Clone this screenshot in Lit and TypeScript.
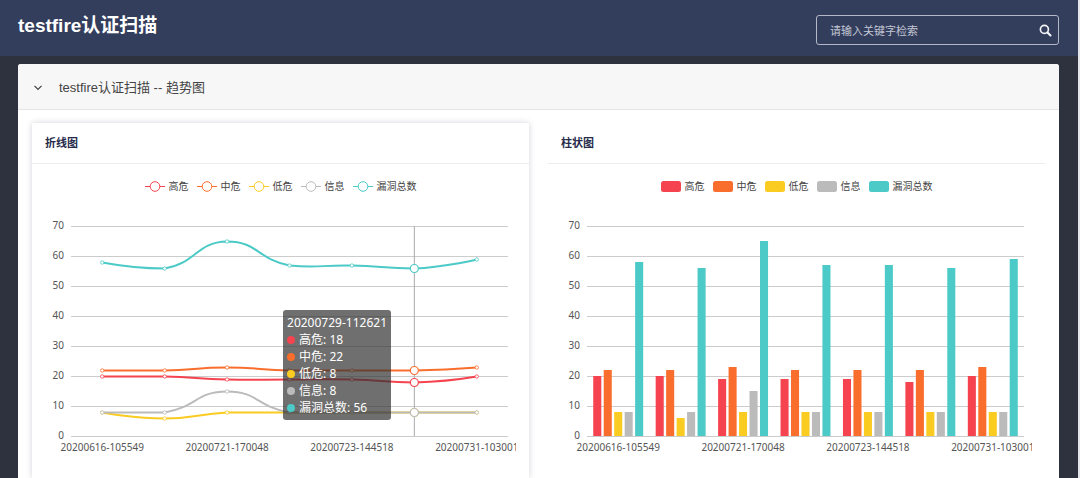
import { LitElement, html, svg, css, nothing } from "lit";
import { customElement, property, state } from "lit/decorators.js";
import { classMap } from "lit/directives/class-map.js";

interface Series {
  name: string;
  color: string;
  values: number[];
}

const SCANS = [
  "20200616-105549",
  "20200716-153012",
  "20200721-170048",
  "20200722-101530",
  "20200723-144518",
  "20200729-112621",
  "20200731-103001",
];

const SERIES: Series[] = [
  { name: "高危", color: "#f5444f", values: [20, 20, 19, 19, 19, 18, 20] },
  { name: "中危", color: "#fa6e2d", values: [22, 22, 23, 22, 22, 22, 23] },
  { name: "低危", color: "#facb21", values: [8, 6, 8, 8, 8, 8, 8] },
  { name: "信息", color: "#bbbbbb", values: [8, 8, 15, 8, 8, 8, 8] },
  { name: "漏洞总数", color: "#4bcac7", values: [58, 56, 65, 57, 57, 56, 59] },
];

const TICKS = [0, 10, 20, 30, 40, 50, 60, 70];
const PLOT = { left: 26, right: 8, top: 33, height: 210 };
const yOf = (v: number) => PLOT.top + PLOT.height - (v / 70) * PLOT.height;

type Point = [number, number];

/** Smooth curve whose control points stay inside the vertical range of the series. */
function smoothPath(points: Point[]): string {
  const ys = points.map((p) => p[1]);
  const min = Math.min(...ys);
  const max = Math.max(...ys);
  const clamp = (y: number) => Math.min(max, Math.max(min, y));
  let d = `M${points[0]}`;
  let out = points[0];
  for (let i = 1; i < points.length; i++) {
    const p = points[i];
    const next = points[i + 1];
    let into = p;
    let nextOut = p;
    if (next) {
      const prev = points[i - 1];
      const v: Point = [next[0] - prev[0], next[1] - prev[1]];
      const before = Math.hypot(p[0] - prev[0], p[1] - prev[1]);
      const after = Math.hypot(next[0] - p[0], next[1] - p[1]);
      const ratio = after / (after + before);
      into = [p[0] - v[0] * 0.5 * (1 - ratio), clamp(p[1] - v[1] * 0.5 * (1 - ratio))];
      nextOut = [p[0] + v[0] * 0.5 * ratio, clamp(p[1] + v[1] * 0.5 * ratio)];
    }
    d += `C${out} ${into} ${p}`;
    out = nextOut;
  }
  return d;
}

@customElement("trend-chart")
export class TrendChart extends LitElement {
  @property() kind: "line" | "bar" = "line";
  @property({ type: Number }) active = -1;
  @state() private width = 471;
  @state() private hidden_ = new Set<string>();

  private observer?: ResizeObserver;

  static styles = css`
    :host {
      display: block;
      position: relative;
      padding-top: 15px;
      font-family: "Noto Sans", "Noto Sans CJK SC", sans-serif;
      font-size: 10px;
      color: #444;
    }
    .legend {
      display: flex;
      justify-content: center;
      gap: 8px;
      margin: 0;
      padding: 0;
      list-style: none;
    }
    .key {
      display: flex;
      align-items: center;
      gap: 4px;
      height: 14px;
      padding: 0;
      border: 0;
      background: none;
      font: inherit;
      line-height: 14px;
      color: #444;
      cursor: pointer;
      white-space: nowrap;
    }
    .key.off {
      opacity: 0.4;
    }
    .mark {
      display: block;
      width: 20px;
      height: 12px;
    }
    .plot {
      display: block;
      width: 100%;
      height: 260px;
      overflow: hidden;
    }
    .plot text {
      fill: #555;
    }
    .grid {
      stroke: #ccc;
    }
    .pointer {
      stroke: #aaa;
    }
    .curve {
      fill: none;
      stroke-width: 2;
      stroke-linejoin: bevel;
    }
    .dot {
      fill: #fff;
    }
    .tip {
      position: absolute;
      top: 146px;
      box-sizing: border-box;
      padding: 4px;
      border-radius: 3px;
      background: rgba(50, 50, 50, 0.7);
      color: #fff;
      font-size: 12px;
      line-height: 17px;
      white-space: nowrap;
      pointer-events: none;
    }
    .row {
      display: flex;
      align-items: center;
      gap: 4px;
      height: 17px;
    }
    .bullet {
      width: 8px;
      height: 8px;
      border-radius: 50%;
    }
  `;

  connectedCallback() {
    super.connectedCallback();
    this.observer = new ResizeObserver(([entry]) => {
      this.width = Math.round(entry.contentRect.width);
    });
    this.observer.observe(this);
  }

  disconnectedCallback() {
    super.disconnectedCallback();
    this.observer?.disconnect();
  }

  private get band() {
    return (this.width - PLOT.left - PLOT.right) / SCANS.length;
  }

  private centre(i: number) {
    return PLOT.left + this.band * (i + 0.5);
  }

  private toggle(name: string) {
    const next = new Set(this.hidden_);
    if (!next.delete(name)) next.add(name);
    this.hidden_ = next;
  }

  private mark(color: string) {
    return this.kind === "line"
      ? html`<svg class="mark" viewBox="0 0 20 12" aria-hidden="true">
          <path d="M0 6.5H20" stroke=${color} stroke-width="1.2" />
          <circle cx="10" cy="6.5" r="4.8" fill="#fff" stroke=${color} />
        </svg>`
      : html`<svg class="mark" viewBox="0 0 20 12" aria-hidden="true">
          <rect y="1" width="20" height="11" rx="2.5" fill=${color} />
        </svg>`;
  }

  private lines(shown: Series[]) {
    return shown.map((s) => {
      const points = s.values.map((v, i): Point => [this.centre(i), yOf(v) + 0.5]);
      return svg`
        <path class="curve" stroke=${s.color} d=${smoothPath(points)} />
        ${points.map(
          (p, i) => svg`<circle class="dot" cx=${p[0]} cy=${p[1]}
            r=${i === this.active ? 4 : 1.7} stroke=${s.color}
            stroke-width=${i === this.active ? 1.2 : 0.8} />`
        )}`;
    });
  }

  private bars(shown: Series[]) {
    const n = shown.length;
    const w = (this.band * 0.8) / (n + (n - 1) * 0.3);
    return shown.map((s, k) =>
      s.values.map((v, i) => {
        const x = PLOT.left + this.band * (i + 0.1) + k * w * 1.3;
        return svg`<rect x=${x} y=${yOf(v)} width=${w} height=${yOf(0) - yOf(v)} fill=${s.color} />`;
      })
    );
  }

  render() {
    const shown = SERIES.filter((s) => !this.hidden_.has(s.name));
    const right = this.width - PLOT.right;
    const hasTip = this.active >= 0;
    return html`
      <ul class="legend">
        ${SERIES.map(
          (s) => html`<li>
            <button
              type="button"
              class=${classMap({ key: true, off: this.hidden_.has(s.name) })}
              @click=${() => this.toggle(s.name)}
            >
              ${this.mark(s.color)}<span>${s.name}</span>
            </button>
          </li>`
        )}
      </ul>
      <svg class="plot">
        ${TICKS.map(
          (t) => svg`
            <line class="grid" x1=${PLOT.left} x2=${right} y1=${yOf(t) + 0.5} y2=${yOf(t) + 0.5} />
            <text x="19" y=${yOf(t) + 3} text-anchor="end">${t}</text>`
        )}
        ${SCANS.map((name, i) =>
          i % 2 === 0
            ? svg`<text x=${this.centre(i)} y="258" text-anchor="middle">${name}</text>`
            : nothing
        )}
        ${hasTip
          ? svg`<line class="pointer" x1=${this.centre(this.active)} x2=${this.centre(this.active)}
              y1=${yOf(70)} y2=${yOf(0)} />`
          : nothing}
        ${this.kind === "line" ? this.lines(shown) : this.bars(shown)}
      </svg>
      ${hasTip
        ? html`<div class="tip" style="right:${Math.round(this.width - this.centre(this.active) + 23)}px">
            ${SCANS[this.active]}
            ${shown.map(
              (s) => html`<div class="row">
                <span class="bullet" style="background:${s.color}"></span>
                <span>${s.name}: ${s.values[this.active]}</span>
              </div>`
            )}
          </div>`
        : nothing}
    `;
  }
}

@customElement("app-root")
export class AppRoot extends LitElement {
  @state() private open = true;

  static styles = css`
    :host {
      display: flex;
      flex-direction: column;
      box-sizing: border-box;
      min-height: 100vh;
      border-right: 2px solid #e4e5ea;
      background: #2e313e;
      font-family: "Liberation Sans", "Noto Sans CJK SC", sans-serif;
    }
    .top {
      display: flex;
      justify-content: space-between;
      align-items: flex-start;
      box-sizing: border-box;
      height: 56px;
      padding: 0 19px 0 18px;
      background: #333d5c;
    }
    .title {
      margin: 0;
      padding-top: 11px;
      font-size: 19px;
      line-height: 30px;
      font-weight: 700;
      color: #fff;
    }
    .search {
      display: flex;
      align-items: center;
      box-sizing: border-box;
      width: 243px;
      height: 30px;
      margin-top: 15px;
      padding: 0 6px 0 13px;
      border: 1px solid #b4b9c8;
      border-radius: 3px;
    }
    .field {
      flex: 1;
      min-width: 0;
      padding: 0;
      border: 0;
      outline: 0;
      background: none;
      color: #fff;
      font-family: "Noto Sans", "Noto Sans CJK SC", sans-serif;
      font-size: 11px;
    }
    .field::placeholder {
      color: #c4c8d4;
      opacity: 1;
    }
    .go {
      display: flex;
      padding: 0;
      border: 0;
      background: none;
      cursor: pointer;
    }
    .card {
      flex: 1;
      display: flex;
      flex-direction: column;
      margin: 8px 19px 0 18px;
      border-radius: 3px 3px 0 0;
      background: #fff;
      overflow: hidden;
    }
    .bar {
      border-bottom: 1px solid #e4e4e6;
      background: #f7f7f7;
      margin: 0;
      font-size: 13px;
      font-weight: 400;
    }
    .fold {
      display: flex;
      align-items: center;
      gap: 16px;
      width: 100%;
      height: 45px;
      padding: 0 15px;
      border: 0;
      background: none;
      font: inherit;
      color: #444;
      text-align: left;
      cursor: pointer;
    }
    .panels {
      flex: 1;
      display: grid;
      grid-template-columns: 1fr 1fr;
      gap: 19px;
      padding: 13px 14px 0;
    }
    .panel {
      min-width: 0;
      background: #fff;
    }
    .raised {
      box-shadow: 0 0 6px rgba(60, 60, 90, 0.22);
    }
    .name {
      margin: 0;
      padding: 0 13px;
      border-bottom: 1px solid #ededf0;
      font-size: 11px;
      line-height: 40px;
      color: #262b4b;
    }
    .body {
      padding: 0 13px;
    }
  `;

  render() {
    return html`
      <header class="top">
        <h1 class="title">testfire认证扫描</h1>
        <form class="search" role="search" @submit=${(e: Event) => e.preventDefault()}>
          <input class="field" type="text" aria-label="请输入关键字检索" placeholder="请输入关键字检索" />
          <button class="go" type="submit" aria-label="检索">
            <svg width="13" height="13" viewBox="0 0 13 13" fill="none" stroke="#f2f3f6">
              <circle cx="5.4" cy="5.4" r="4" stroke-width="1.7" />
              <path d="M8.5 8.5L11.5 11.5" stroke-width="2.1" stroke-linecap="round" />
            </svg>
          </button>
        </form>
      </header>
      <main class="card">
        <h2 class="bar">
          <button class="fold" type="button" aria-expanded=${this.open} @click=${() => (this.open = !this.open)}>
            <svg width="10" height="10" viewBox="0 0 10 10" fill="none" stroke="#444" stroke-width="1.3">
              <path d="M1.5 3.9L5 7.4L8.5 3.9" />
            </svg>
            <span>testfire认证扫描 -- 趋势图</span>
          </button>
        </h2>
        ${this.open
          ? html`<div class="panels">
              <section class="panel raised">
                <h3 class="name">折线图</h3>
                <div class="body"><trend-chart kind="line" active="5"></trend-chart></div>
              </section>
              <section class="panel">
                <h3 class="name">柱状图</h3>
                <div class="body"><trend-chart kind="bar"></trend-chart></div>
              </section>
            </div>`
          : nothing}
      </main>
    `;
  }
}
